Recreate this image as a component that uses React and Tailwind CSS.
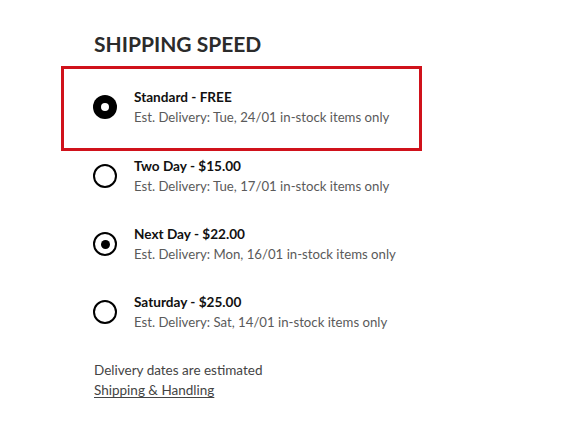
const options = [
  { id: 'standard', title: 'Standard - FREE', eta: 'Tue, 24/01' },
  { id: 'two', title: 'Two Day - $15.00', eta: 'Tue, 17/01' },
  { id: 'next', title: 'Next Day - $22.00', eta: 'Mon, 16/01' },
  { id: 'sat', title: 'Saturday - $25.00', eta: 'Sat, 14/01' },
];

const Radio = ({ variant }) => {
  if (variant === 'focus') {
    return (
      <span className="w-6 h-6 rounded-full bg-black flex items-center justify-center shrink-0">
        <span className="w-[8px] h-[8px] rounded-full bg-white" />
      </span>
    );
  }
  return (
    <span className="w-6 h-6 rounded-full border-2 border-black flex items-center justify-center shrink-0">
      {variant === 'checked' && <span className="w-[9px] h-[9px] rounded-full bg-black" />}
    </span>
  );
};

const Option = ({ option, variant }) => (
  <div className="flex items-center gap-[17px]">
    <Radio variant={variant} />
    <div className="leading-[20px]">
      <div className="text-[13.6px] font-bold text-[#111]">{option.title}</div>
      <div className="text-[13.2px] text-[#5a5a5a]">Est. Delivery: {option.eta} in-stock items only</div>
    </div>
  </div>
);

export default function App() {
  return (
    <div className="min-h-[432px] w-[578px] bg-white font-['Lato',sans-serif] pt-[30px] pl-[61px]">
      <h2 className="pl-[33px] text-[21px] leading-[28px] font-bold text-[#2b2b2b]">
        SHIPPING SPEED
      </h2>

      <div className="mt-[8px] w-[361px] h-[85px] border-[3px] border-[#d0121b] flex items-center pl-[29px] pb-[3px]">
        <Option option={options[0]} variant="focus" />
      </div>

      <div className="mt-[5px] pl-[32px] flex flex-col gap-[28px]">
        <Option option={options[1]} />
        <Option option={options[2]} variant="checked" />
        <Option option={options[3]} />
      </div>

      <div className="mt-[28px] pl-[33px] text-[13.5px] leading-[20px] text-[#444]">
        <div>Delivery dates are estimated</div>
        <a href="#" className="underline underline-offset-2">Shipping &amp; Handling</a>
      </div>
    </div>
  );
}
